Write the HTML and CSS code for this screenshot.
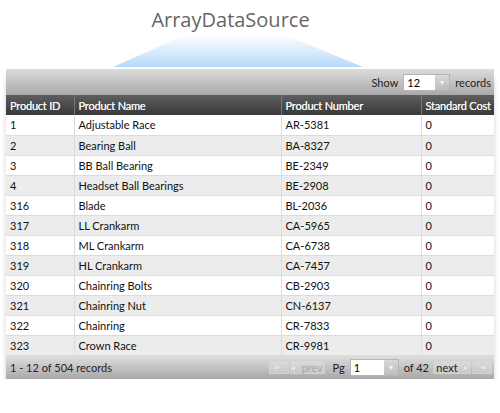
FILE: index.html
```html
<!DOCTYPE html>
<html lang="en">
  <head>
    <meta charset="UTF-8" />
    <title>ArrayDataSource</title>
    <link rel="stylesheet" href="styles.css">
  </head>
  <body>
    <!-- Title with beam -->
    <div class="title">ArrayDataSource</div>
    <div class="beam">
      <svg width="500" height="34" viewBox="0 0 500 34">
        <defs>
          <linearGradient id="beamGrad" x1="0" y1="0" x2="0" y2="1">
            <stop offset="0" stop-color="#ffffff" />
            <stop offset="1" stop-color="#b5d9fa" />
          </linearGradient>
        </defs>
        <polygon points="113,32 363,32 285,0 185,0" fill="url(#beamGrad)" />
      </svg>
    </div>

    <!-- Grid -->
    <div class="grid">
      <div class="toolbar">
        <span>Show</span>
        <span class="combo"><span class="combo-text">12</span><span class="combo-btn">&#9662;</span></span>
        <span>records</span>
      </div>

      <table>
        <thead>
          <tr>
            <th class="c1">Product ID</th>
            <th class="c2">Product Name</th>
            <th class="c3">Product Number</th>
            <th class="c4">Standard Cost</th>
          </tr>
        </thead>
        <tbody>
          <tr><td>1</td><td>Adjustable Race</td><td>AR-5381</td><td>0</td></tr>
          <tr><td>2</td><td>Bearing Ball</td><td>BA-8327</td><td>0</td></tr>
          <tr><td>3</td><td>BB Ball Bearing</td><td>BE-2349</td><td>0</td></tr>
          <tr><td>4</td><td>Headset Ball Bearings</td><td>BE-2908</td><td>0</td></tr>
          <tr><td>316</td><td>Blade</td><td>BL-2036</td><td>0</td></tr>
          <tr><td>317</td><td>LL Crankarm</td><td>CA-5965</td><td>0</td></tr>
          <tr><td>318</td><td>ML Crankarm</td><td>CA-6738</td><td>0</td></tr>
          <tr><td>319</td><td>HL Crankarm</td><td>CA-7457</td><td>0</td></tr>
          <tr><td>320</td><td>Chainring Bolts</td><td>CB-2903</td><td>0</td></tr>
          <tr><td>321</td><td>Chainring Nut</td><td>CN-6137</td><td>0</td></tr>
          <tr><td>322</td><td>Chainring</td><td>CR-7833</td><td>0</td></tr>
          <tr><td>323</td><td>Crown Race</td><td>CR-9981</td><td>0</td></tr>
        </tbody>
      </table>

      <div class="footer">
        <span class="summary">1 - 12 of 504 records</span>
        <div class="pager">
          <span class="pbtn first">&#8676;</span>
          <span class="pbtn prev"><span class="arr">&#9666;</span><span class="dim">prev</span></span>
          <span class="pg">Pg</span>
          <span class="combo page"><span class="combo-text">1</span><span class="combo-btn">&#9662;</span></span>
          <span class="of">of 42</span>
          <span class="pbtn next">next<span class="arr">&#9656;</span></span>
          <span class="pbtn last">&#8677;</span>
        </div>
      </div>
    </div>
  </body>
</html>
```

FILE: styles.css
```css
/* General */
body {
  margin: 0;
  padding: 0;
  background: #ffffff;
  font-family: "Lato", "Open Sans", sans-serif;
  font-size: 11px;
  color: #111;
}

/* Title */
.title {
  height: 35px;
  padding-top: 9px;
  box-sizing: border-box;
  padding-right: 39px;
  text-align: center;
  font-family: "Open Sans", sans-serif;
  font-size: 20px;
  line-height: 22px;
  color: #666;
}

.beam {
  height: 34px;
}

.beam svg {
  display: block;
}

/* Grid panel */
.grid {
  width: 488px;
  margin-left: 6px;
  box-shadow: 0 7px 7px -3px rgba(0, 0, 0, 0.45);
}

.toolbar {
  height: 26px;
  display: flex;
  align-items: center;
  justify-content: flex-end;
  gap: 5px;
  padding-right: 3px;
  background: linear-gradient(#dcdcdc, #a9a9a9);
  color: #222;
}

.combo {
  display: flex;
  height: 15px;
  border: 1px solid #b5b5b5;
  background: #fff;
}

.combo-text {
  width: 28px;
  padding-left: 3px;
  line-height: 15px;
  color: #000;
}

.combo-btn {
  width: 14px;
  text-align: center;
  font-size: 8px;
  line-height: 15px;
  color: #f4f4f4;
  background: linear-gradient(#d8d8d8, #bdbdbd);
}

/* Table */
table {
  width: 488px;
  border-collapse: collapse;
  table-layout: fixed;
}

.c1 { width: 68px; }
.c2 { width: 207px; }
.c3 { width: 140px; }
.c4 { width: 73px; }

th {
  height: 20px;
  padding: 0 3px 0 4px;
  text-align: left;
  font-weight: normal;
  letter-spacing: -0.2px;
  text-shadow: 0 0 0.6px #ffffff;
  white-space: nowrap;
  overflow: hidden;
  color: #f2f2f2;
  background: linear-gradient(#5e5e5e, #393939);
  border-left: 1px solid #777;
  box-sizing: border-box;
}

th:first-child {
  border-left: none;
}

td {
  height: 20px;
  padding: 0 4px;
  border-left: 1px solid #dcdcdc;
  border-bottom: 1px solid #dcdcdc;
  box-sizing: border-box;
  white-space: nowrap;
}

td:first-child {
  border-left: none;
}

tbody tr:nth-child(even) td {
  background: #ececec;
}

/* Footer */
.footer {
  height: 23px;
  display: flex;
  align-items: center;
  justify-content: space-between;
  padding: 0 2px 0 4px;
  background: linear-gradient(#dedede, #a8a8a8);
  color: #222;
}

.pager {
  display: flex;
  align-items: center;
  gap: 1px;
}

.pbtn {
  display: flex;
  align-items: center;
  justify-content: center;
  gap: 6px;
  height: 14px;
  box-sizing: border-box;
  border: 1px solid #d2d2d2;
  background: linear-gradient(#dadada, #c9c9c9);
  color: #222;
  font-size: 11px;
}

.pbtn.first,
.pbtn.last {
  width: 20px;
  font-size: 8px;
  color: #ececec;
}

.pbtn.prev {
  width: 35px;
}

.pbtn.next {
  width: 38px;
}

.dim {
  color: #a8a8a8;
}

.arr {
  font-size: 7px;
  color: #ececec;
}

.pg {
  margin: 0 4px 0 7px;
}

.combo.page .combo-text {
  width: 30px;
}

.of {
  margin: 0 3px 0 4px;
}
```
